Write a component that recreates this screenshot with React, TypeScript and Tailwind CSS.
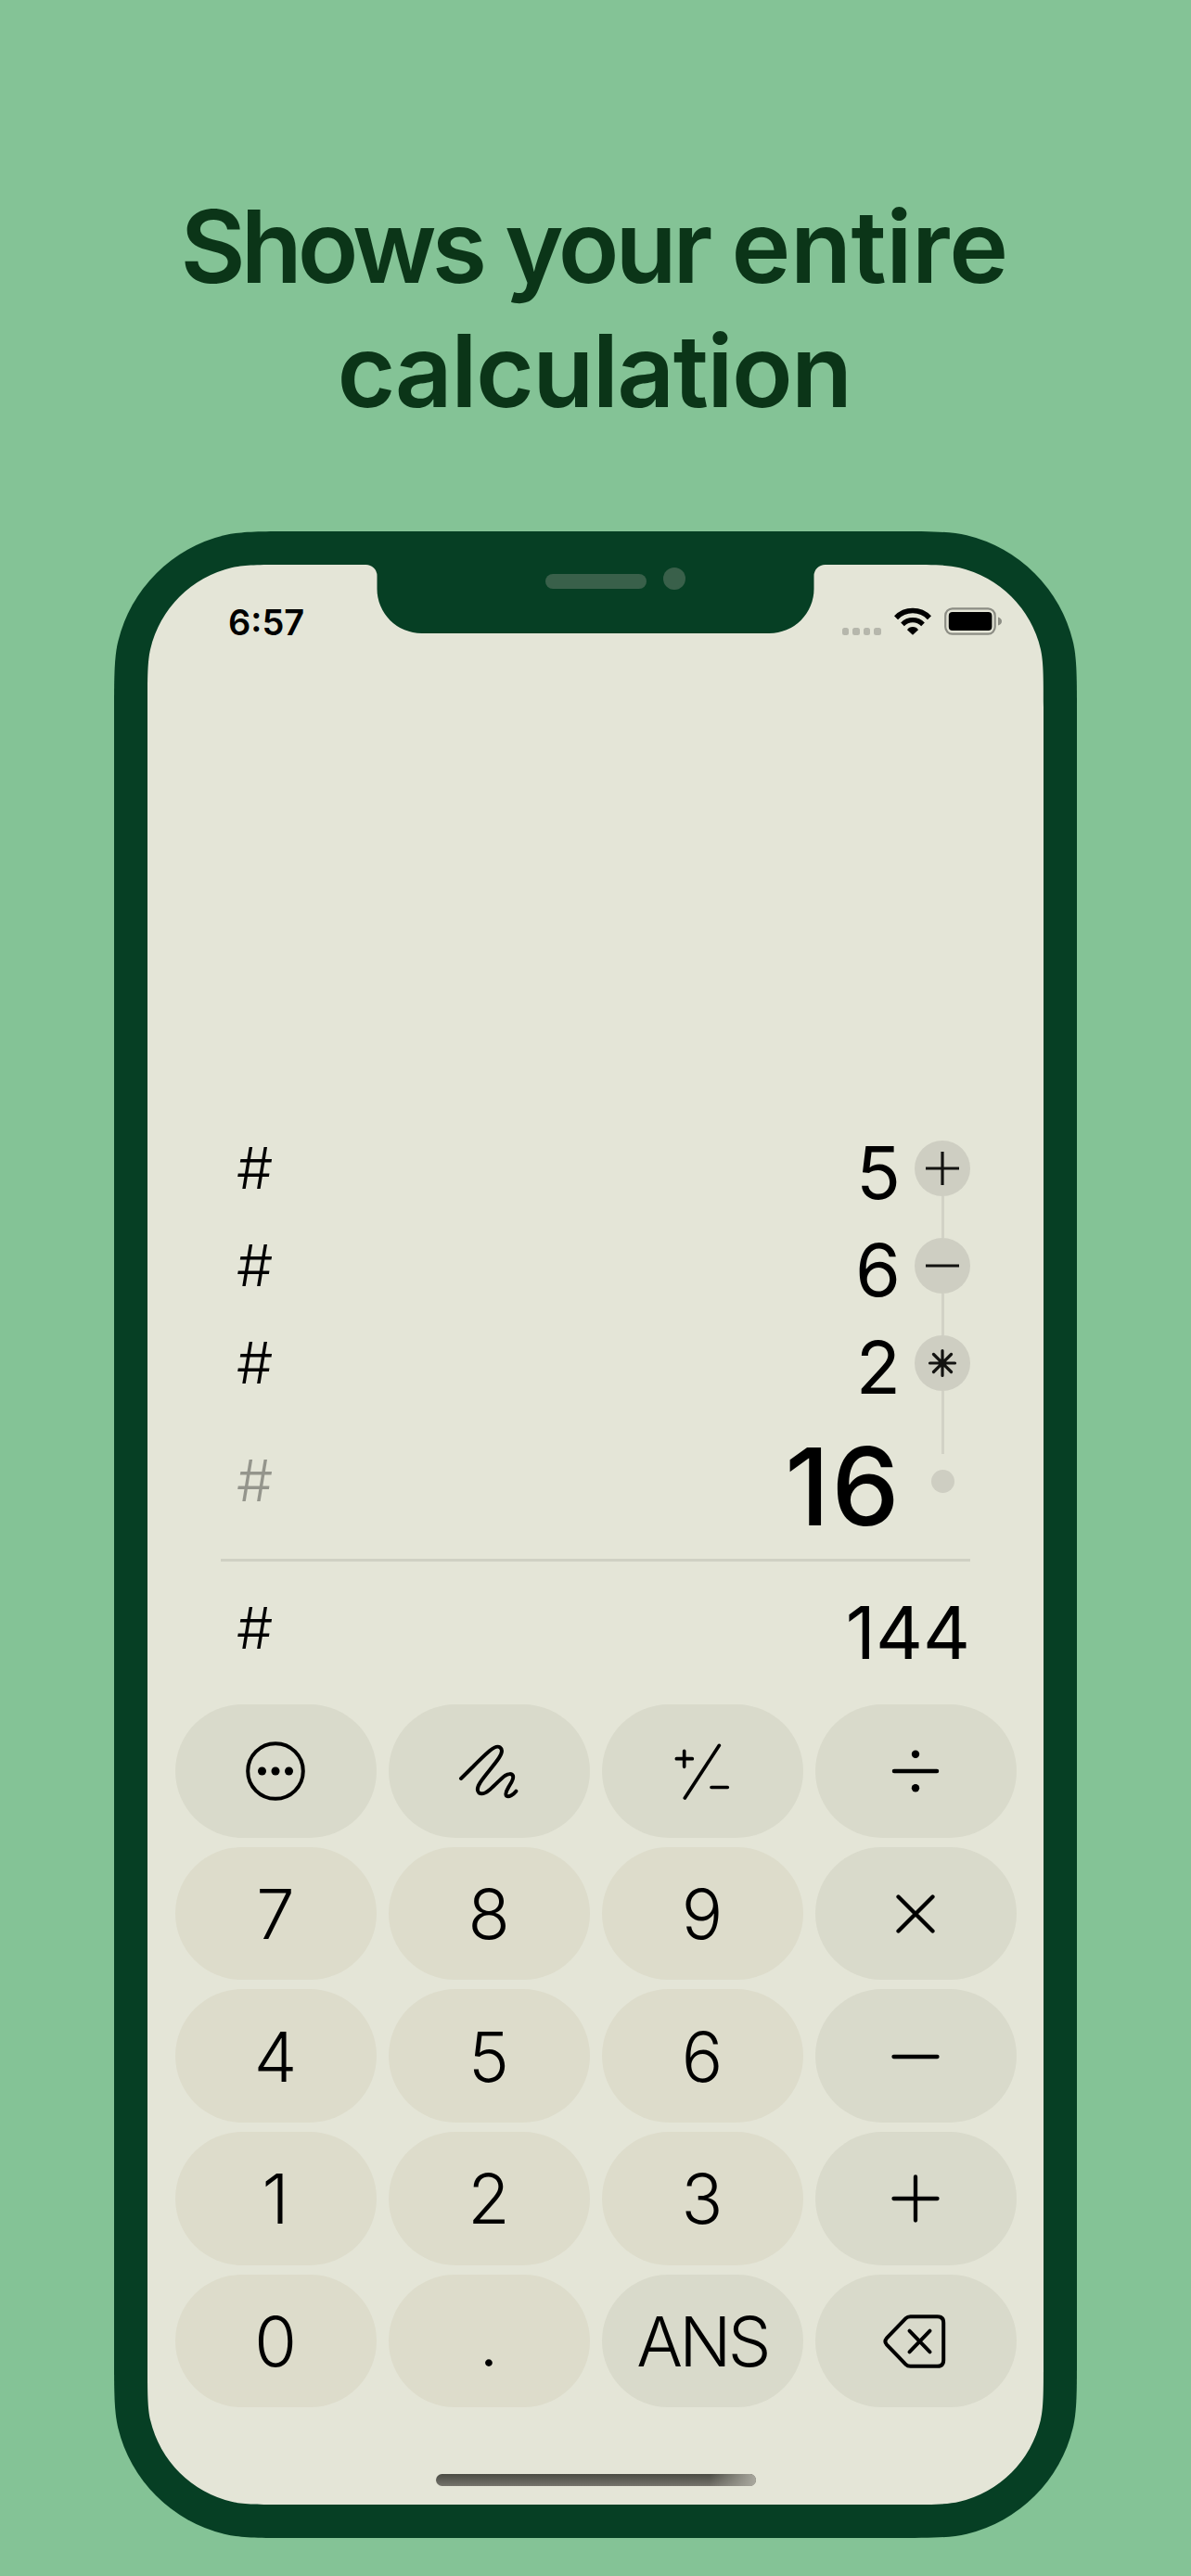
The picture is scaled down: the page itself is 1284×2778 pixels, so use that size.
import type { ReactNode } from "react";

const FRAME_CLIP =
  "[clip-path:path('M201.5_0H836.5c43.25_0_64.88_0_82.72_4.28a155_155_0_0_1_114.5_114.5c4.28_17.84_4.28_39.47_4.28_82.72V1962.5c0_43.25_0_64.88_-4.28_82.72a155_155_0_0_1_-114.5_114.5c-17.84_4.28_-39.47_4.28_-82.72_4.28H201.5c-43.25_0_-64.88_0_-82.72_-4.28a155_155_0_0_1_-114.5_-114.5c-4.28_-17.84_-4.28_-39.47_-4.28_-82.72V201.5c0_-43.25_0_-64.88_4.28_-82.72a155_155_0_0_1_114.5_-114.5c17.84_-4.28_39.47_-4.28_82.72_-4.28Z')]";

const SCREEN_CLIP =
  "[clip-path:path('M153.4_0H235.5a12_12_0_0_1_12_12V26a48_48_0_0_0_48_48H670.5a48_48_0_0_0_48_-48V12a12_12_0_0_1_12_-12H812.6c32.93_0_49.39_0_62.97_3.26a118_118_0_0_1_87.17_87.17c3.26_13.58_3.26_30.04_3.26_62.97V1938.6c0_32.93_0_49.39_-3.26_62.97a118_118_0_0_1_-87.17_87.17c-13.58_3.26_-30.04_3.26_-62.97_3.26H153.4c-32.93_0_-49.39_0_-62.97_-3.26a118_118_0_0_1_-87.17_-87.17c-3.26_-13.58_-3.26_-30.04_-3.26_-62.97V153.4c0_-32.93_0_-49.39_3.26_-62.97a118_118_0_0_1_87.17_-87.17c13.58_-3.26_30.04_-3.26_62.97_-3.26Z')]";

const stroke = {
  fill: "none",
  stroke: "currentColor",
  strokeLinecap: "round" as const,
  strokeLinejoin: "round" as const,
};

function MoreIcon() {
  return (
    <svg width="64" height="64" viewBox="0 0 64 64">
      <circle cx="32" cy="32" r="29.8" strokeWidth="4" {...stroke} />
      <circle cx="17.5" cy="32" r="4.5" />
      <circle cx="32" cy="32" r="4.5" />
      <circle cx="46.5" cy="32" r="4.5" />
    </svg>
  );
}

function ScribbleIcon() {
  return (
    <svg width="66" height="60" viewBox="942 181 198 180">
      <path
        d="M951 295C978 270 1012 232 1044 205C1056 195 1068 188 1077 194C1087 201 1083 214 1074 228C1057 254 1030 282 1013 308C1004 322 1002 334 1009 341C1018 348 1031 342 1045 330C1062 316 1077 298 1093 286C1104 279 1115 278 1119 286C1123 297 1112 310 1104 324C1098 334 1093 345 1098 351C1106 357 1120 347 1129 336"
        strokeWidth="12"
        {...stroke}
      />
    </svg>
  );
}

function PlusMinusIcon() {
  return (
    <svg width="60" height="62" viewBox="262 178 180 186">
      <path d="M269 231H320M294 206V257M407 188L296 358M382 323.500H434" strokeWidth="11" {...stroke} />
    </svg>
  );
}

function DivideIcon() {
  return (
    <svg width="52" height="52" viewBox="0 0 52 52">
      <path d="M3 26H49" strokeWidth="4.500" {...stroke} />
      <circle cx="26" cy="7.800" r="4.200" />
      <circle cx="26" cy="44.200" r="4.200" />
    </svg>
  );
}

function TimesIcon() {
  return (
    <svg width="42" height="42" viewBox="0 0 42 42">
      <path d="M2.500 2.500L39.500 39.500M39.500 2.500L2.500 39.500" strokeWidth="4.300" {...stroke} />
    </svg>
  );
}

function MinusIcon() {
  return (
    <svg width="52" height="52" viewBox="0 0 52 52">
      <path d="M2.500 26H49.500" strokeWidth="4.300" {...stroke} />
    </svg>
  );
}

function PlusIcon() {
  return (
    <svg width="52" height="52" viewBox="0 0 52 52">
      <path d="M2.500 26H49.500M26 2.500V49.500" strokeWidth="4.300" {...stroke} />
    </svg>
  );
}

function DeleteIcon() {
  return (
    <svg width="68" height="58" viewBox="0 0 68 58" className="mr-[2px]">
      <path
        d="M29.500 2.200H58.500Q65.200 2.200 65.200 8.700V49.300Q65.200 55.800 58.500 55.800H29.500Q26.500 55.800 24.500 53.800L3.800 32.300Q1 29 3.800 25.700L24.500 4.200Q26.500 2.200 29.500 2.200Z"
        strokeWidth="4"
        {...stroke}
      />
      <path d="M28.500 17.700L50.500 40.300M50.500 17.700L28.500 40.300" strokeWidth="4" {...stroke} />
    </svg>
  );
}

function WifiIcon() {
  return (
    <svg width="40" height="30" viewBox="0 0 40 30">
      <path d="M2 11.200A25 25 0 0 1 38 11.200" fill="none" stroke="currentColor" strokeWidth="5.600" />
      <path d="M9 18.300A15.500 15.500 0 0 1 31 18.300" fill="none" stroke="currentColor" strokeWidth="5.200" />
      <path d="M14 24.200Q16 21 20 21T26 24.200L20 29.800Z" />
    </svg>
  );
}

function BatteryIcon() {
  return (
    <svg width="63" height="30" viewBox="0 0 63 30">
      <rect x="1.200" y="1.400" width="53.500" height="27.200" rx="7.500" fill="none" stroke="#8c8d84" strokeWidth="2.200" />
      <rect x="4.800" y="5" width="46.600" height="20" rx="4" />
      <path d="M58 10.500Q62 12 62 15T58 19.500Z" fill="#8c8d84" />
    </svg>
  );
}

type Operator = "plus" | "minus" | "times";

const operatorPaths: Record<Operator, string> = {
  plus: "M12 30H48M30 12V48",
  minus: "M12 30H48",
  times: "M16.500 30H43.500M30 16.500V43.500M20.500 20.500L39.500 39.500M39.500 20.500L20.500 39.500",
};

function OperatorBadge({ operator }: { operator: Operator }) {
  return (
    <div className="size-[60px] shrink-0 rounded-full bg-[#cecec2] text-[#131311]">
      <svg width="60" height="60" viewBox="0 0 60 60">
        <path
          d={operatorPaths[operator]}
          fill="none"
          stroke="currentColor"
          strokeWidth="3.200"
          strokeLinecap={operator === "times" ? "round" : "butt"}
        />
        {operator === "times" && <circle cx="30" cy="30" r="4.500" fill="currentColor" />}
      </svg>
    </div>
  );
}

function Tag({ dim = false }: { dim?: boolean }) {
  return (
    <span className={`mb-px ml-[17px] text-[62px] leading-none font-[350] ${dim ? "text-black/35" : "text-black"}`}>#</span>
  );
}

const history: { value: string; operator: Operator }[] = [
  { value: "5", operator: "plus" },
  { value: "6", operator: "minus" },
  { value: "2", operator: "times" },
];

type Key = { id: string; label: ReactNode; muted?: boolean };

const keys: Key[] = [
  { id: "more", label: <MoreIcon />, muted: true },
  { id: "scribble", label: <ScribbleIcon />, muted: true },
  { id: "sign", label: <PlusMinusIcon />, muted: true },
  { id: "divide", label: <DivideIcon />, muted: true },
  { id: "7", label: "7" },
  { id: "8", label: "8" },
  { id: "9", label: "9" },
  { id: "multiply", label: <TimesIcon />, muted: true },
  { id: "4", label: "4" },
  { id: "5", label: "5" },
  { id: "6", label: "6" },
  { id: "subtract", label: <MinusIcon />, muted: true },
  { id: "1", label: "1" },
  { id: "2", label: "2" },
  { id: "3", label: "3" },
  { id: "add", label: <PlusIcon />, muted: true },
  { id: "0", label: "0" },
  { id: "point", label: "." },
  { id: "answer", label: <span className="tracking-[-0.05em]">ANS</span>, muted: true },
  { id: "delete", label: <DeleteIcon />, muted: true },
];

function StatusBar() {
  return (
    <div className="flex h-[150px] items-start justify-between pt-[42px] pr-[44px] pl-[87px] text-black">
      <span className="text-[38px] leading-[40px] font-semibold">6:57</span>
      <div className="mt-[4px] flex items-end">
        <div className="mr-[14px] flex gap-[4px]">
          {[0, 1, 2, 3].map((dot) => (
            <span key={dot} className="size-[7.600px] rounded-[2.500px] bg-black/20" />
          ))}
        </div>
        <WifiIcon />
        <div className="ml-[14px]">
          <BatteryIcon />
        </div>
      </div>
    </div>
  );
}

function Tape() {
  return (
    <div className="mx-[79px] mt-[448.500px]">
      {history.map(({ value, operator }) => (
        <div key={value} className="flex h-[105px] items-center">
          <Tag />
          <span className="mt-[8px] mr-[15px] ml-auto text-[79px] leading-none">{value}</span>
          <div className="relative">
            <OperatorBadge operator={operator} />
            <div
              className={`absolute top-full left-[28.500px] w-[3px] bg-[#d2d2c6] ${operator === "times" ? "h-[68px]" : "h-[45px]"}`}
            />
          </div>
        </div>
      ))}
      <div className="flex h-[150px] items-center">
        <Tag dim />
        <span className="mt-[11px] mr-[14px] ml-auto text-[116px] leading-none font-medium tracking-[0.02em]">16</span>
        <div className="flex w-[60px] justify-center">
          <span className="size-[25px] rounded-full bg-[#cecec2]" />
        </div>
      </div>
      <div className="mt-[8.500px] h-[3px] bg-[#cfd0c3]" />
      <div className="flex h-[144px] items-center justify-between">
        <Tag />
        <span className="mt-[9px] text-[79px] leading-none">144</span>
      </div>
    </div>
  );
}

function Keypad() {
  return (
    <div className="mt-[10px] ml-[29.500px] grid w-[907px] grid-cols-4 gap-x-[13px] gap-y-[10px]">
      {keys.map(({ id, label, muted }) => (
        <button
          key={id}
          className={`flex h-[143.670px] items-center justify-center rounded-full pt-px text-[74px] leading-none font-light text-black ${muted ? "bg-[#d9dacb]" : "bg-[#dddccb]"}`}
        >
          {label}
        </button>
      ))}
    </div>
  );
}

export default function App() {
  return (
    <main className="flex h-[2778px] w-[1284px] flex-col items-center overflow-hidden bg-[#84c396] pt-[199px] font-['Inter','Liberation_Sans',sans-serif]">
      <h1 className="mr-[3px] text-center text-[108px] leading-[134px] font-semibold tracking-[-0.027em] text-[#0b3518]">
        <span className="tracking-[-0.046em]">Shows</span> <span className="tracking-[-0.038em]">your</span>{" "}
        <span className="tracking-[-0.004em]">entire</span>
        <br />
        <span className="tracking-[-0.015em]">calculation</span>
      </h1>
      <div className={`relative mt-[106px] h-[2164px] w-[1038px] shrink-0 bg-[#063f24] p-[36px] ${FRAME_CLIP}`}>
        <div className="absolute top-[46px] left-[464.500px] h-[16px] w-[109px] rounded-full bg-[#39604a]" />
        <div className="absolute top-[39px] left-[592px] size-[24px] rounded-full bg-[#39604a]" />
        <div className={`flex h-[2092px] w-[966px] flex-col bg-[#e4e5d7] ${SCREEN_CLIP}`}>
          <StatusBar />
          <Tape />
          <Keypad />
          <div className="mt-[72px] ml-[311px] h-[13px] w-[345px] overflow-hidden rounded-full bg-linear-to-b from-[#4b4c44] to-[#75736c]">
            <div className="ml-auto h-full w-[50px] bg-linear-to-r from-transparent to-[#a9a89e]" />
          </div>
        </div>
      </div>
    </main>
  );
}
